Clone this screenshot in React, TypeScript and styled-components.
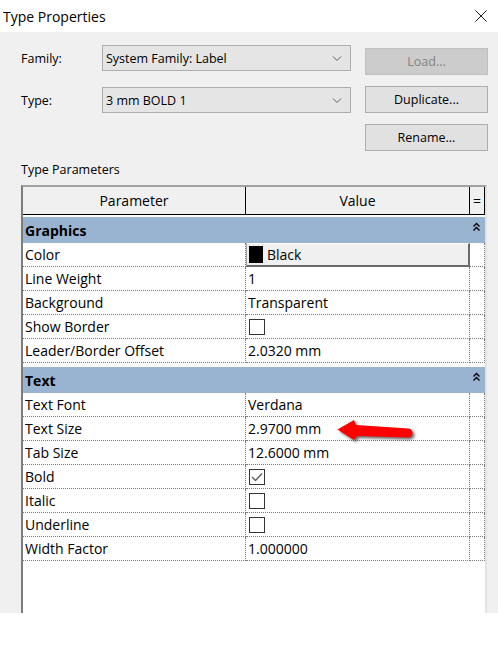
import styled, { createGlobalStyle } from "styled-components"

const GlobalStyle = createGlobalStyle`
body {
    margin: 0;
    background: #ffffff;
    font-family: "Open Sans", "Noto Sans", sans-serif;
    color: #000000;
}
`

const Dialog = styled.div`
width: 498px;
height: 613px;
background: #f0f0f0;
display: flex;
flex-direction: column;
overflow: hidden;
`
const TitleBar = styled.div`
flex: none;
height: 32px;
background: #ffffff;
display: flex;
align-items: center;
justify-content: space-between;
padding: 0 11px 0 3px;
font-size: 14px;
`
const TopArea = styled.div`
display: flex;
padding-left: 21px;
`
const Fields = styled.div`
display: flex;
flex-direction: column;
gap: 16px;
padding-top: 13px;
`
const FieldRow = styled.div`
display: flex;
align-items: center;
`
const FieldLabel = styled.div`
width: 81px;
font-size: 12.5px;
`
const Combo = styled.div`
width: 249px;
height: 26px;
box-sizing: border-box;
border: 1px solid #adadad;
background: #e5e5e5;
display: flex;
align-items: center;
justify-content: space-between;
padding: 0 8px 0 3px;
font-size: 12.5px;
`
const Buttons = styled.div`
display: flex;
flex-direction: column;
gap: 11px;
padding-top: 16px;
margin-left: 14px;
`
const Button = styled.div<{ $disabled?: boolean }>`
width: 123px;
height: 27px;
box-sizing: border-box;
border: 1px solid ${p => p.$disabled ? "#bfbfbf" : "#adadad"};
background: ${p => p.$disabled ? "#cccccc" : "#e1e1e1"};
color: ${p => p.$disabled ? "#838383" : "#000000"};
display: flex;
align-items: center;
justify-content: center;
font-size: 12.5px;
`
const SectionLabel = styled.div`
margin: 11px 0 7px 21px;
line-height: 16px;
font-size: 12.5px;
`
const Grid = styled.div`
flex: 1;
margin-left: 21px;
width: 466px;
box-sizing: border-box;
background: #ffffff;
border-left: 2px solid #7c7c7c;
border-top: 2px solid #a0a0a0;
border-right: 2px solid #e3e3e3;
display: flex;
flex-direction: column;
font-size: 14px;
`
const Row = styled.div<{ $head?: boolean }>`
display: grid;
grid-template-columns: 223px 224px 15px;
height: ${p => p.$head ? 28 : 24}px;
`
const HeadCell = styled.div`
background: #f0f0f0;
border-right: 1px solid #000000;
border-bottom: 1px solid #000000;
display: flex;
align-items: center;
justify-content: center;
`
const Cell = styled.div<{ $bare?: boolean }>`
position: relative;
box-sizing: border-box;
border-right: ${p => p.$bare ? "none" : "1px dotted #7a7a7a"};
border-bottom: ${p => p.$bare ? "none" : "1px dotted #7a7a7a"};
padding-left: ${p => p.$bare ? 0 : 2}px;
display: flex;
align-items: center;
white-space: nowrap;
`
const GroupHeader = styled.div<{ $gap: number }>`
margin-top: ${p => p.$gap}px;
height: 26px;
background: #99b4d1;
display: flex;
font-weight: 700;
`
const GroupTitle = styled.div`
flex: 1;
padding-left: 2px;
display: flex;
align-items: center;
`
const GroupToggle = styled.div`
width: 15px;
padding: 5px 0 0 3px;
box-sizing: border-box;
display: flex;
align-items: flex-start;
`
const ColorButton = styled.div`
width: 100%;
height: 100%;
box-sizing: border-box;
background: #f0f0f0;
border-style: solid;
border-width: 1px 2px 2px 1px;
border-color: #ffffff #6a6a6a #6a6a6a #a0a0a0;
display: flex;
align-items: center;
gap: 4px;
padding-left: 2px;
`
const Swatch = styled.div`
width: 14px;
height: 17px;
background: #000000;
`
const CheckBox = styled.div`
width: 16px;
height: 16px;
box-sizing: border-box;
margin-left: 1px;
border: 1px solid #333333;
background: #ffffff;
display: flex;
align-items: center;
justify-content: center;
`
const Arrow = styled.svg`
position: absolute;
left: 90px;
top: 2px;
overflow: visible;
filter: drop-shadow(2px 2px 1.5px rgba(0, 0, 0, 0.6));
`

type Param = { name: string, value?: string, kind?: "color" | "check" | "box", mark?: boolean }

const groups: { title: string, gap: number, rows: Param[] }[] = [
    {
        title: "Graphics", gap: 2, rows: [
            { name: "Color", value: "Black", kind: "color" },
            { name: "Line Weight", value: "1" },
            { name: "Background", value: "Transparent" },
            { name: "Show Border", kind: "box" },
            { name: "Leader/Border Offset", value: "2.0320 mm" },
        ]
    },
    {
        title: "Text", gap: 4, rows: [
            { name: "Text Font", value: "Verdana" },
            { name: "Text Size", value: "2.9700 mm", mark: true },
            { name: "Tab Size", value: "12.6000 mm" },
            { name: "Bold", kind: "check" },
            { name: "Italic", kind: "box" },
            { name: "Underline", kind: "box" },
            { name: "Width Factor", value: "1.000000" },
        ]
    },
]

const Chevron = () => (
    <svg width="10" height="5" viewBox="0 0 10 5">
        <path d="M1 0.5 L5 4.5 L9 0.5" fill="none" stroke="#606060" strokeWidth="1" />
    </svg>
)

const renderValue = (p: Param) => {
    if (p.kind === "color") {
        return (
            <ColorButton>
                <Swatch />
                {p.value}
            </ColorButton>
        )
    }
    if (p.kind === "check" || p.kind === "box") {
        return (
            <CheckBox>
                {p.kind === "check" &&
                    <svg width="12" height="10" viewBox="0 0 12 10">
                        <path d="M1 5 L4.5 8.5 L11 1.5" fill="none" stroke="#5a5a5a" strokeWidth="1.3" />
                    </svg>
                }
            </CheckBox>
        )
    }
    return p.value
}

const App = () => {
    return (
        <>
            <GlobalStyle />
            <Dialog>
                <TitleBar>
                    Type Properties
                    <svg width="12" height="12" viewBox="0 0 12 12">
                        <path d="M0.5 0.5 L11.5 11.5 M11.5 0.5 L0.5 11.5" stroke="#000" strokeWidth="0.9" />
                    </svg>
                </TitleBar>
                <TopArea>
                    <Fields>
                        <FieldRow>
                            <FieldLabel>Family:</FieldLabel>
                            <Combo>System Family: Label<Chevron /></Combo>
                        </FieldRow>
                        <FieldRow>
                            <FieldLabel>Type:</FieldLabel>
                            <Combo>3 mm BOLD 1<Chevron /></Combo>
                        </FieldRow>
                    </Fields>
                    <Buttons>
                        <Button $disabled>Load...</Button>
                        <Button>Duplicate...</Button>
                        <Button>Rename...</Button>
                    </Buttons>
                </TopArea>
                <SectionLabel>Type Parameters</SectionLabel>
                <Grid>
                    <Row $head>
                        <HeadCell>Parameter</HeadCell>
                        <HeadCell>Value</HeadCell>
                        <HeadCell>=</HeadCell>
                    </Row>
                    {groups.map(g =>
                        <div key={g.title}>
                            <GroupHeader $gap={g.gap}>
                                <GroupTitle>{g.title}</GroupTitle>
                                <GroupToggle>
                                    <svg width="7" height="9" viewBox="0 0 7 9">
                                        <path d="M0.5 4.5 L3.5 1.5 L6.5 4.5 M0.5 8.5 L3.5 5.5 L6.5 8.5" fill="none" stroke="#000" strokeWidth="1.4" />
                                    </svg>
                                </GroupToggle>
                            </GroupHeader>
                            {g.rows.map(p =>
                                <Row key={p.name}>
                                    <Cell>{p.name}</Cell>
                                    <Cell $bare={p.kind === "color"}>
                                        {renderValue(p)}
                                        {p.mark &&
                                            <Arrow width="80" height="22" viewBox="0 0 80 22">
                                                <path d="M1.5 10.5 L18 1 L20 6 L72 9.5 A4.5 4.5 0 0 1 72 18.5 L21 17 L18 21 Z" fill="#ff0000" />
                                            </Arrow>
                                        }
                                    </Cell>
                                    <Cell />
                                </Row>
                            )}
                        </div>
                    )}
                </Grid>
            </Dialog>
        </>
    )
}

export default App
